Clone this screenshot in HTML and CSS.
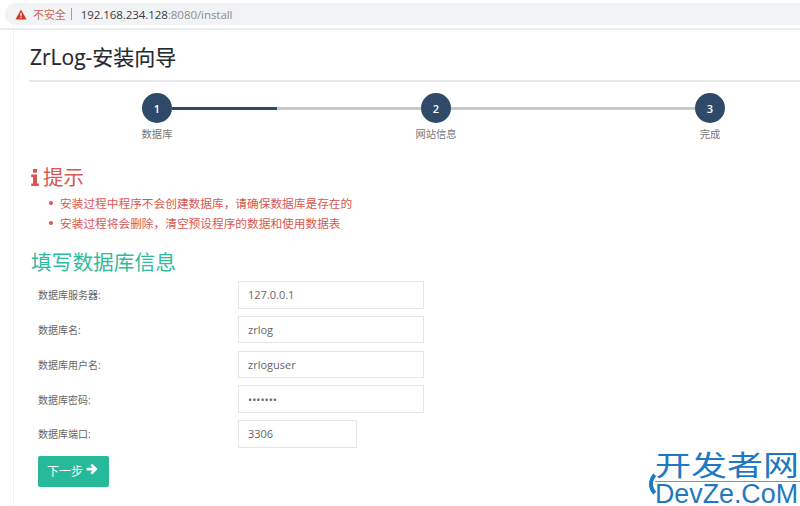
FILE: index.html
```html
<!DOCTYPE html>
<html lang="zh-CN">
<head>
<meta charset="utf-8">
<title>ZrLog-安装向导</title>
<link rel="stylesheet" href="styles.css">
</head>
<body>
<header class="browser">
  <div class="addr">
    <svg class="warn" width="12" height="11" viewBox="0 0 12 11"><path d="M6 0.5 L11.6 10.5 H0.4 Z" fill="#d5362c"/><rect x="5.4" y="3.8" width="1.2" height="3.6" fill="#fff"/><rect x="5.4" y="8" width="1.2" height="1.2" fill="#fff"/></svg>
    <span class="insecure">不安全</span>
    <span class="sep"></span>
    <span class="host">192.168.234.128</span><span class="path">:8080/install</span>
  </div>
</header>
<main class="page">
  <h1 class="title">ZrLog-安装向导</h1>
  <div class="stepper">
    <div class="step"><span class="dot">1</span><span class="step-label">数据库</span></div>
    <div class="link link-a"><span class="link-done"></span></div>
    <div class="step"><span class="dot">2</span><span class="step-label">网站信息</span></div>
    <div class="link link-b"></div>
    <div class="step"><span class="dot">3</span><span class="step-label">完成</span></div>
  </div>
  <h3 class="notice-head">
    <svg class="info" width="8" height="17" viewBox="0 0 8 17"><rect x="2" y="0" width="4" height="3.6" fill="#d9534f"/><path d="M0.2 5.6 H6 V14.6 H7.8 V17 H0.2 V14.6 H2 V8 H0.2 Z" fill="#d9534f"/></svg>
    提示
  </h3>
  <ul class="notice">
    <li>安装过程中程序不会创建数据库，请确保数据库是存在的</li>
    <li>安装过程将会删除，清空预设程序的数据和使用数据表</li>
  </ul>
  <h3 class="form-head">填写数据库信息</h3>
  <form class="form">
    <label class="lbl">数据库服务器:</label><input class="field" type="text" value="127.0.0.1">
    <label class="lbl">数据库名:</label><input class="field" type="text" value="zrlog">
    <label class="lbl">数据库用户名:</label><input class="field" type="text" value="zrloguser">
    <label class="lbl">数据库密码:</label><input class="field" type="password" value="1234567">
    <label class="lbl">数据库端口:</label><input class="field field-short" type="text" value="3306">
  </form>
  <button class="next" type="button">下一步
    <svg width="12" height="12" viewBox="0 0 11 11"><path d="M5.6 0.6 L10.8 5.6 L5.6 10.6 L4 9 L6.2 6.9 H0.6 V4.3 H6.2 L4 2.2 Z" fill="#fff"/></svg>
  </button>
</main>
<div class="mark">
  <span class="mark-arc"></span>
  <div class="mark-top">开发者网</div>
  <div class="mark-bottom">DevZe.CoM</div>
</div>
</body>
</html>
```
FILE: styles.css
```css
* { box-sizing: border-box; }
html, body { margin: 0; height: 506px; overflow: hidden; background: #fff; }
body { font-family: "Open Sans", "Noto Sans CJK SC", sans-serif; position: relative; }

.browser { height: 30px; padding-top: 3px; border-bottom: 2px solid #e9ebec; }
.addr {
  height: 22px; margin-left: 5px; padding-left: 10px;
  display: flex; align-items: center;
  background: #f1f3f4; border-radius: 11px 0 0 11px;
  font-size: 11.6px; letter-spacing: -0.1px;
}
.warn { margin-right: 6px; }
.insecure { color: #c9695f; font-size: 11px; }
.sep { width: 1px; height: 12px; background: #9aa0a6; margin: 0 9px 0 5px; }
.host { color: #3c4043; }
.path { color: #8b9094; }

.page { margin-left: 13px; border-left: 1px solid #eef0f1; padding-left: 15px; height: 476px; }
.title {
  margin: 0; height: 52px; padding-top: 13px; padding-left: 1px;
  font-size: 21px; line-height: 28px; font-weight: 400; color: #24292e;
  -webkit-text-stroke: 0.15px #24292e;
  border-bottom: 2px solid #e9eaeb;
}

.stepper { display: flex; margin: 11px 0 0 113px; height: 65px; }
.step { width: 30px; flex: none; display: flex; flex-direction: column; align-items: center; }
.dot {
  width: 30px; height: 30px; border-radius: 50%; flex: none;
  background: #2f4a68; color: #fff; font-size: 11px; font-weight: 600;
  display: flex; align-items: center; justify-content: center;
}
.step-label { margin-top: 4px; font-size: 10.3px; line-height: 14px; color: #777; white-space: nowrap; }
.link { height: 3px; margin-top: 14px; background: #c8c8c8; flex: none; }
.link-a { width: 249px; }
.link-b { width: 244px; }
.link-done { display: block; width: 105px; height: 3px; background: #2f4a68; }

.notice-head {
  margin: 5px 0 0 2px; display: flex; align-items: center; gap: 4px;
  font-size: 20.5px; line-height: 28px; font-weight: 400; color: #d9574f;
}
.notice { margin: 2px 0 0; padding: 0 0 0 20px; list-style: none; color: #d9574f; font-size: 11.7px; line-height: 20px; }
.notice li { display: flex; align-items: center; gap: 7px; }
.notice li::before { content: ""; width: 4px; height: 4px; border-radius: 50%; background: #d9574f; flex: none; }

.form-head { margin: 15px 0 0 2px; font-size: 20.7px; line-height: 28px; font-weight: 400; color: #2fbb9c; }

.form {
  margin: 5px 0 0 9px;
  display: grid; grid-template-columns: 200px 186px; grid-auto-rows: 27.5px; row-gap: 7.3px;
  align-items: center;
}
.lbl { font-size: 10px; color: #666; }
.field {
  width: 100%; height: 100%; padding: 0 6px 0 9px;
  border: 1px solid #e3e5e7; border-radius: 0; outline: 0; background: #fff;
  font: 11px "Open Sans", sans-serif; color: #666;
}
.field-short { width: 119px; }

.next {
  display: flex; align-items: center; gap: 3px;
  margin: 8px 0 0 9px; width: 71px; height: 31px; padding: 0 0 0 9px;
  border: 0; border-radius: 2px; background: #26b99a; color: #fff;
  font: 12px "Open Sans", "Noto Sans CJK SC", sans-serif;
}
.next svg { margin-top: -5px; }

.mark { position: absolute; left: 648px; top: 449px; width: 152px; height: 57px; background: rgba(255,255,255,.85); }
.mark-arc { position: absolute; left: 1px; top: 20px; width: 30px; height: 30px; border: 4px solid #1f7ac4; border-radius: 50%; border-right-color: transparent; border-top-color: transparent; border-bottom-color: transparent; }
.mark-top { position: absolute; left: 7px; top: 1px; font: 36px/32px "Noto Sans CJK SC", sans-serif; color: #1f78c1; white-space: nowrap; transform: scaleY(.8); transform-origin: 0 0; }
.mark-bottom { position: absolute; left: 7px; top: 32px; width: 145px; font: 26.8px/24px "Liberation Sans", sans-serif; color: #1f78c1; white-space: nowrap; border-top: 1px solid #4aa6dd; }
```
